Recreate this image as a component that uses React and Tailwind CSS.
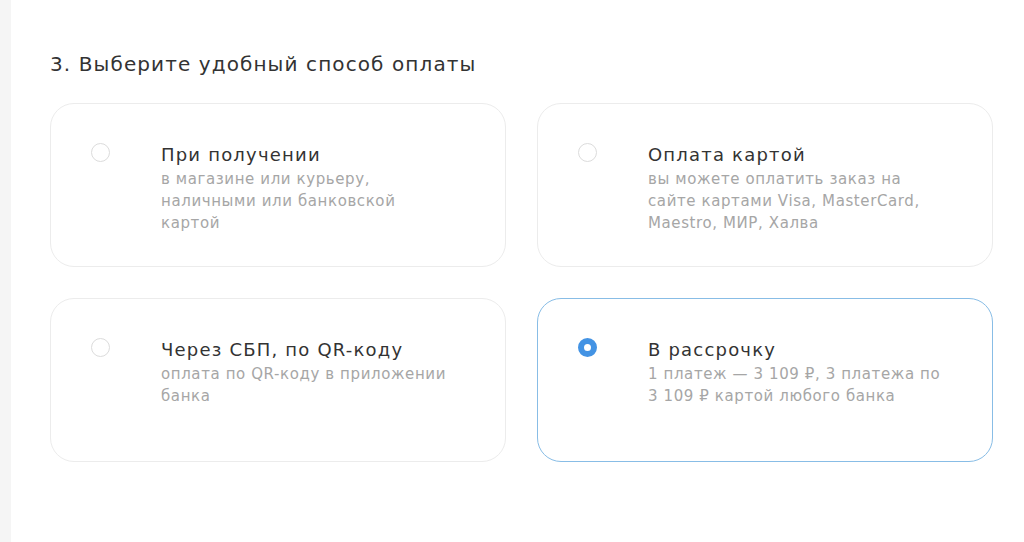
const OPTIONS = [
  {
    id: 'cash',
    title: 'При получении',
    lines: ['в магазине или курьеру,', 'наличными или банковской', 'картой'],
  },
  {
    id: 'card',
    title: 'Оплата картой',
    lines: ['вы можете оплатить заказ на', 'сайте картами Visa, MasterCard,', 'Maestro, МИР, Халва'],
  },
  {
    id: 'sbp',
    title: 'Через СБП, по QR-коду',
    lines: ['оплата по QR-коду в приложении', 'банка'],
  },
  {
    id: 'credit',
    title: 'В рассрочку',
    lines: ['1 платеж — 3 109 ₽, 3 платежа по', '3 109 ₽ картой любого банка'],
  },
];

function Radio({ checked }) {
  if (checked) {
    return <span className="block w-[19px] h-[19px] rounded-full border-[6px] border-[#4393e4] bg-white" />;
  }
  return <span className="block w-[19px] h-[19px] rounded-full border border-[#dcdcdc] bg-white" />;
}

export default function App() {
  const selected = 'credit';

  return (
    <div className="flex min-h-[542px] bg-white" style={{ fontFamily: '"DejaVu Sans", "Noto Sans", sans-serif' }}>
      <div className="w-[11px] shrink-0 bg-[#f5f5f5]" />
      <div className="flex-1 pl-[39px] pr-[30px] pt-[50px]">
        <h2 className="text-[20px] leading-[28px] text-[#333333] tracking-[1.1px]">3. Выберите удобный способ оплаты</h2>
        <div className="mt-[25px] grid grid-cols-[456px_456px] gap-x-[31px] gap-y-[31px]">
          {OPTIONS.map((o) => {
            const isOn = o.id === selected;
            return (
              <div
                key={o.id}
                className={`h-[164px] rounded-[24px] border flex pl-[40px] pt-[39px] ${
                  isOn ? 'border-[#88bde6]' : 'border-[#ececec]'
                }`}
              >
                <div className="w-[70px] shrink-0">
                  <Radio checked={isOn} />
                </div>
                <div>
                  <div className="text-[18px] leading-[24px] text-[#333333] tracking-[1.2px]">{o.title}</div>
                  <div className="mt-[1px] text-[15px] leading-[22px] text-[#a6a6a6] tracking-[0.6px]">
                    {o.lines.map((l, i) => (
                      <div key={i} className="whitespace-nowrap">{l}</div>
                    ))}
                  </div>
                </div>
              </div>
            );
          })}
        </div>
      </div>
    </div>
  );
}
